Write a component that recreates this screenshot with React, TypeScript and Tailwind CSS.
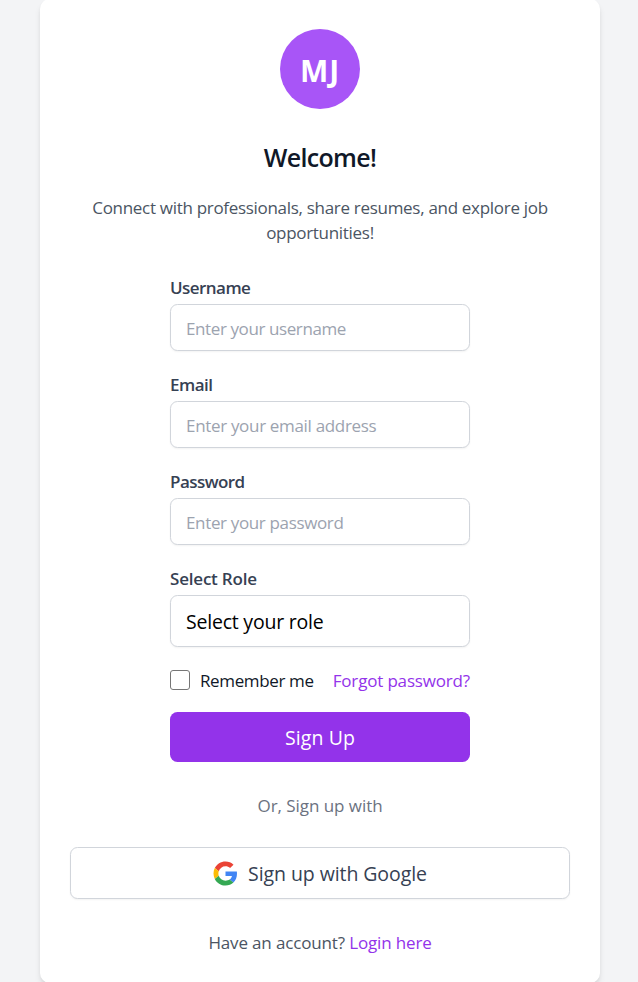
import React from "react";

type FieldProps = {
  id: string;
  label: string;
  type: string;
  placeholder: string;
  labelTracking: string;
  inputTracking: string;
};

function Field({ id, label, type, placeholder, labelTracking, inputTracking }: FieldProps) {
  return (
    <div className="mb-[21px]">
      <label
        htmlFor={id}
        className={`block h-[25px] text-[17px] leading-[25px] font-semibold text-gray-700 ${labelTracking}`}
      >
        {label}
      </label>
      <input
        id={id}
        type={type}
        placeholder={placeholder}
        className={`mt-1 block h-[47px] w-full rounded-[7.5px] border border-[#d1d5db] bg-white px-[15px] pt-[2px] text-[17px] shadow-[0_1px_2px_rgba(0,0,0,0.05)] outline-none placeholder:text-[#9ca3af] ${inputTracking}`}
      />
    </div>
  );
}

function GoogleLogo() {
  return (
    <svg viewBox="-1 -1 50 50" className="mr-2.5 h-[25px] w-[25px]" aria-hidden="true">
      <path fill="#EA4335" d="M24 9.5c3.54 0 6.71 1.22 9.21 3.6l6.85-6.85C35.9 2.38 30.47 0 24 0 14.62 0 6.51 5.38 2.56 13.22l7.98 6.19C12.43 13.72 17.74 9.5 24 9.5z" />
      <path fill="#4285F4" d="M46.98 24.55c0-1.57-.15-3.09-.38-4.55H24v9.02h12.94c-.58 2.96-2.26 5.48-4.78 7.18l7.73 6c4.51-4.18 7.09-10.36 7.09-17.65z" />
      <path fill="#FBBC05" d="M10.53 28.59c-.48-1.45-.76-2.99-.76-4.59s.27-3.14.76-4.59l-7.98-6.19C.92 16.46 0 20.12 0 24c0 3.88.92 7.54 2.56 10.78l7.97-6.19z" />
      <path fill="#34A853" d="M24 48c6.48 0 11.93-2.13 15.89-5.81l-7.73-6c-2.15 1.45-4.92 2.3-8.16 2.3-6.26 0-11.57-4.22-13.47-9.91l-7.98 6.19C6.51 42.62 14.62 48 24 48z" />
    </svg>
  );
}

export default function App() {
  return (
    <div className="flex h-[982px] justify-center overflow-hidden bg-[#f3f4f6] font-['Open_Sans','Noto_Sans',sans-serif]">
      <main className="-mt-px ml-[2px] flex h-[984px] w-[560px] shrink-0 flex-col items-center rounded-[10px] bg-white px-[30px] pt-[30px] shadow-[0_5px_7.5px_-1px_rgba(0,0,0,0.1),0_2.5px_5px_-2.5px_rgba(0,0,0,0.1)]">
        <div className="flex h-20 w-20 shrink-0 items-center justify-center rounded-full bg-[#a855f7] pt-[2px] text-[30px] font-bold tracking-[1px] text-white">
          MJ
        </div>
        <h1 className="mt-[29px] h-[38px] text-[25px] leading-[38px] font-semibold tracking-[-0.65px] text-gray-900">
          Welcome!
        </h1>
        <p className="mt-[19px] h-[50px] w-[480px] text-center text-[17px] leading-[25px] tracking-[-0.3px] text-[#4b5563]">
          Connect with professionals, share resumes, and explore job opportunities!
        </p>
        <form className="mt-[30px] w-[300px]" onSubmit={(e) => e.preventDefault()}>
          <Field id="username" label="Username" type="text" placeholder="Enter your username" labelTracking="tracking-[-0.55px]" inputTracking="tracking-[-0.4px]" />
          <Field id="email" label="Email" type="email" placeholder="Enter your email address" labelTracking="tracking-[-0.5px]" inputTracking="tracking-[-0.32px]" />
          <Field id="password" label="Password" type="password" placeholder="Enter your password" labelTracking="tracking-[-0.55px]" inputTracking="tracking-[-0.35px]" />
          <label htmlFor="role" className="block h-[25px] text-[17px] leading-[25px] font-semibold tracking-[-0.2px] text-gray-700">
            Select Role
          </label>
          <select
            id="role"
            className="mt-1 block h-[52px] w-full appearance-none rounded-[7.5px] border border-[#d1d5db] bg-white px-[15px] pt-px text-[19.5px] tracking-[-0.22px] text-black shadow-[0_1px_2px_rgba(0,0,0,0.05)] outline-none"
          >
            <option>Select your role</option>
          </select>
          <div className="mt-5 flex h-[25px] items-center justify-between text-[17px] leading-[25px]">
            <label className="flex items-center whitespace-nowrap tracking-[-0.37px] text-gray-900">
              <input type="checkbox" className="mr-2.5 h-5 w-5 appearance-none rounded-[3px] border border-[#767676] bg-white" />
              <span className="pt-[2px] leading-[25px]">Remember me</span>
            </label>
            <a className="pt-[2px] whitespace-nowrap tracking-[-0.17px] text-[#9333ea]">Forgot password?</a>
          </div>
          <button type="submit" className="mt-5 block h-[50px] w-full rounded-[7.5px] bg-[#9333ea] pt-px text-[19.5px] tracking-[0.1px] text-white">
            Sign Up
          </button>
        </form>
        <p className="mt-[31px] h-[25px] text-[17px] leading-[25px] tracking-[-0.05px] text-[#6b7280]">Or, Sign up with</p>
        <button
          type="button"
          className="mt-[29px] flex h-[52px] w-full shrink-0 items-center justify-center rounded-[7.5px] border border-[#d1d5db] bg-white text-[19.5px] tracking-[-0.08px] text-gray-700 shadow-[0_1px_2px_rgba(0,0,0,0.05)]"
        >
          <GoogleLogo />
          <span className="pt-px">Sign up with Google</span>
        </button>
        <p className="mt-[31px] h-[25px] text-[17px] leading-[25px] tracking-[-0.15px] text-[#4b5563]">
          Have an account? <a className="text-[#9333ea]">Login here</a>
        </p>
      </main>
    </div>
  );
}
